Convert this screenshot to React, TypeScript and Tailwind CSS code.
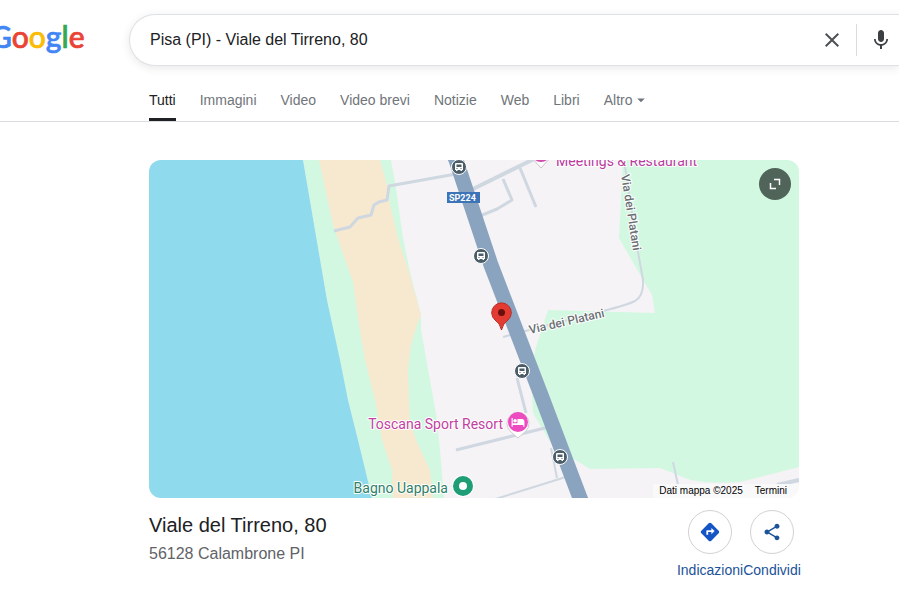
import { useState } from "react";
import {
  MdArrowDropDown,
  MdClose,
  MdDirections,
  MdHotel,
  MdMic,
  MdShare,
} from "react-icons/md";

const tabs = ["Tutti", "Immagini", "Video", "Video brevi", "Notizie", "Web", "Libri"];

const busStops = [
  { x: 310, y: 7 },
  { x: 332, y: 96 },
  { x: 373, y: 211 },
  { x: 411, y: 297 },
];

const Logo = () => (
  <svg width="96" height="44" viewBox="0 0 96 44" role="img" aria-label="Google">
    <text x="0" y="30" fontSize="30" fontWeight="500" strokeWidth="0.7" fontFamily="Lato, sans-serif">
      <tspan fill="#4285f4" stroke="#4285f4">G</tspan>
      <tspan fill="#ea4335" stroke="#ea4335">o</tspan>
      <tspan fill="#fbbc05" stroke="#fbbc05">o</tspan>
      <tspan fill="#4285f4" stroke="#4285f4">g</tspan>
      <tspan fill="#34a853" stroke="#34a853">l</tspan>
      <tspan fill="#ea4335" stroke="#ea4335">e</tspan>
    </text>
  </svg>
);

const SearchBar = () => {
  const [query, setQuery] = useState("Pisa (PI) - Viale del Tirreno, 80");

  return (
    <form
      onSubmit={(e) => e.preventDefault()}
      className="flex h-[52px] min-w-0 flex-1 items-center rounded-l-full border border-r-0 border-[#dfe1e5] bg-white pl-5 shadow-[0_2px_8px_rgba(60,64,67,0.12)]"
    >
      <input
        type="text"
        aria-label="Cerca"
        value={query}
        onChange={(e) => setQuery(e.target.value)}
        className="min-w-0 flex-1 bg-transparent text-base text-[#202124] outline-none"
      />
      <button type="button" aria-label="Cancella" onClick={() => setQuery("")} className="px-3 text-[#4d5156]">
        <MdClose size={24} />
      </button>
      <span className="h-8 w-px bg-[#dadce0]" />
      <button type="button" aria-label="Ricerca vocale" className="pr-1.5 pl-3 text-[#3c4043]">
        <MdMic size={24} />
      </button>
    </form>
  );
};

const Tabs = () => (
  <nav className="flex h-14 items-stretch gap-6 border-b border-[#dadce0] pl-[149px] text-sm whitespace-nowrap text-[#70757a]">
    {tabs.map((tab, i) => (
      <a
        key={tab}
        href="#"
        className={
          i === 0
            ? "flex items-center border-b-[3px] border-[#202124] pt-[15px] text-[#202124]"
            : "flex items-center border-b-[3px] border-transparent pt-[15px]"
        }
      >
        {tab}
      </a>
    ))}
    <button type="button" className="flex items-center border-b-[3px] border-transparent pt-[15px]">
      Altro
      <MdArrowDropDown size={18} />
    </button>
  </nav>
);

const BusStop = ({ x, y }: { x: number; y: number }) => (
  <g transform={`translate(${x} ${y})`}>
    <circle r="7.500" fill="#4b5d68" stroke="#fff" strokeWidth="1" />
    <path d="M-3 -4H3Q4 -4 4 -3V3H3V4H1.500V3H-1.500V4H-3V3H-4V-3Q-4 -4 -3 -4Z" fill="#fff" />
    <path d="M-2.500 -2.500H2.500V0H-2.500ZM-2.500 1H-1.500V2H-2.500ZM1.500 1H2.500V2H1.500Z" fill="#4b5d68" />
  </g>
);

const MapDrawing = () => (
  <svg
    viewBox="0 0 650 338"
    preserveAspectRatio="xMidYMid slice"
    className="block h-full w-full font-['Roboto',sans-serif]"
  >
    {/* land, sea, beach */}
    <rect width="650" height="338" fill="#f5f3f5" />
    <path
      d="M154 0H242L247 28L254 78L261 112L272 155L272 170L281 220L288 260L291 290L295 338H221L209 280L199 240L178 140Z"
      fill="#d3f8e2"
    />
    <path d="M0 0H154L178 140L191 200L199 240L209 280L223 338H0Z" fill="#90daee" />
    <path
      d="M170 0L184 65L204 122L210 165L216 200L226 240L233 280L243 310L244 338H284L281 310L267 280L261 260L260 240L259 210L262 185L268 165L272 155L260 112L249 78L240 40L239 28L231 0Z"
      fill="#f6e9cf"
    />
    {/* park */}
    <path
      d="M474 0L470 78L493 118L503 135L506 153L399 150L386 190L382 218L384 253L403 285L431 303L441 309L511 308L529 315Q546 325 591 322L650 307V0Z"
      fill="#d3f8e2"
    />
    {/* minor roads */}
    <g fill="none" stroke="#cfd7e1" strokeWidth="3" strokeLinejoin="round">
      <path d="M185 71L201 67L209 58L222 55L225 45L230 42L238 40L240 26L307 14" />
      <path d="M318 32L385 -1" strokeWidth="4" />
      <path d="M354 19L363 40L348 49L331 56" />
      <path d="M371 8L387 47" />
      <path d="M475 0L481 40L489 92L494 120Q495 136 486 141Q478 145 454 151L380 170L354 177" strokeWidth="2" />
      <path d="M368 218L377 253" />
      <path d="M307 290L400 267" />
      <path d="M402 288L408 318" strokeWidth="2" />
      <path d="M340 341L372 331L420 316" strokeWidth="2" />
      <path d="M524 302L529 325" strokeWidth="2" />
      <path d="M628 325L650 320" strokeWidth="4" />
    </g>
    <path d="M303 -10L307 0L342 105L392 235L431 338L435 348" fill="none" stroke="#8aa4c0" strokeWidth="15" />

    <rect x="298" y="32" width="33" height="11" fill="#3d74b8" />
    <text x="300" y="41" fontSize="9" fontWeight="700" fill="#fff">
      SP224
    </text>

    {busStops.map((stop) => (
      <BusStop key={stop.y} x={stop.x} y={stop.y} />
    ))}

    {/* street and place names */}
    <g stroke="#fff" strokeWidth="2" strokeLinejoin="round" paintOrder="stroke">
      <g fontSize="12" fontWeight="500" fill="#6a6f73">
        <text x="0" y="0" transform="translate(472 15) rotate(81)">
          Via dei Platani
        </text>
        <text x="0" y="0" transform="translate(381 174) rotate(-13)">
          Via dei Platani
        </text>
      </g>
      <g fontSize="14">
        <text x="407" y="6" fill="#b93ba0">
          Meetings &amp; Restaurant
        </text>
        <text x="354" y="269" textAnchor="end" fill="#c240a2">
          Toscana Sport Resort
        </text>
        <text x="299" y="333" textAnchor="end" fill="#2f8068">
          Bagno Uappala
        </text>
      </g>
    </g>

    <path d="M381 -4L392 8L403 -4Z" fill="#fff" stroke="#c9c3c8" strokeWidth="1" />
    <circle cx="392" cy="-8" r="10" fill="#d04bac" />
    <path d="M369 278L361 271A11 11 0 1 1 377 271Z" fill="#fff" stroke="#d4cdd3" strokeWidth="1" />
    <circle cx="369" cy="262" r="10" fill="#ee4bc0" />
    <MdHotel x={362} y={255} size={14} color="#fff" />
    <circle cx="314" cy="326" r="11" fill="#fff" />
    <circle cx="314" cy="326" r="10" fill="#1e9d77" />
    <circle cx="314" cy="326" r="4" fill="#fff" />

    <path
      d="M352.500 170Q351 163 346 160A9.800 9.800 0 1 1 359 160Q354 163 352.500 170Z"
      fill="#e33b32"
      stroke="#b92d27"
      strokeWidth="1"
    />
    <circle cx="352.500" cy="152.500" r="3.500" fill="#6b0f0c" />
  </svg>
);

const MapCard = () => (
  <div className="relative h-[338px] overflow-hidden rounded-xl">
    <MapDrawing />
    <button
      type="button"
      aria-label="Espandi mappa"
      className="absolute top-2 right-2 flex size-8 items-center justify-center rounded-full bg-[#50645a] text-white"
    >
      <svg width="12" height="12" viewBox="0 0 12 12" fill="none" stroke="currentColor" strokeWidth="1.500">
        <path d="M5 1.500H10.500V7M1.500 5V10.500H7" />
      </svg>
    </button>
    <div className="absolute right-0 bottom-0 flex gap-3 bg-[#faf9fa] pr-3 pl-1.5 text-[10px] leading-[14px] text-black">
      <span>Dati mappa ©2025</span>
      <a href="#">Termini</a>
    </div>
  </div>
);

const App = () => {
  return (
    <div className="overflow-x-hidden bg-white font-['Liberation_Sans',Arial,sans-serif]">
      <header>
        <div className="flex items-center pt-3.5">
          <a href="#" className="-ml-2.5 w-[139px] shrink-0">
            <Logo />
          </a>
          <SearchBar />
        </div>
        <Tabs />
      </header>

      <main className="mr-6 ml-[149px] max-w-[650px] pt-[38px] pb-4">
        <MapCard />
        <div className="flex items-start justify-between pt-3">
          <div>
            <h1 className="text-xl leading-[30px] text-[#202124]">Viale del Tirreno, 80</h1>
            <p className="text-base leading-7 text-[#5f6368]">56128 Calambrone PI</p>
          </div>
          <div className="-mr-1 flex text-sm text-[#1b5298]">
            <button type="button" className="flex w-[62px] flex-col items-center gap-1.5">
              <span className="flex size-11 items-center justify-center rounded-full border border-[#d2d2d2] text-[#1454c4]">
                <MdDirections size={22} />
              </span>
              <span className="whitespace-nowrap">Indicazioni</span>
            </button>
            <button type="button" className="flex w-[62px] flex-col items-center gap-1.5">
              <span className="flex size-11 items-center justify-center rounded-full border border-[#d2d2d2]">
                <MdShare size={20} />
              </span>
              <span className="whitespace-nowrap">Condividi</span>
            </button>
          </div>
        </div>
      </main>
    </div>
  );
};

export default App;
